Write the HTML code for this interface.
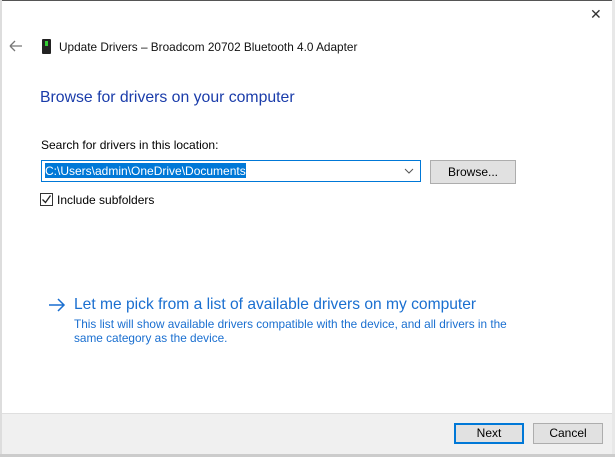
<!DOCTYPE html>
<html><head><meta charset="utf-8"><style>
*{margin:0;padding:0;box-sizing:border-box}
body{width:615px;height:457px;background:#fff;font-family:"Liberation Sans",sans-serif;font-size:12px;color:#000;position:relative;overflow:hidden}
.a{position:absolute;white-space:nowrap}
</style></head><body>
<div class="a" style="left:0;top:0;width:615px;height:1px;background:#555"></div>
<div class="a" style="left:0;top:0;width:2px;height:457px;background:#ddd"></div>
<div class="a" style="left:612px;top:0;width:3px;height:457px;background:#e8e8e8"></div>
<div class="a" style="left:590px;top:6px;font-size:14px;color:#333">✕</div>
<svg class="a" style="left:9px;top:40px" width="14" height="12"><path d="M1 6H13M1 6L6 1M1 6L6 11" stroke="#777" stroke-width="1.3" fill="none"/></svg>
<div class="a" style="left:42px;top:39px;width:9px;height:15px;background:#222;border-radius:1px"></div>
<div class="a" style="left:45px;top:41px;width:3px;height:5px;background:#3c3"></div>
<div class="a" style="left:59px;top:40px;font-size:11.8px;color:#111">Update Drivers – Broadcom 20702 Bluetooth 4.0 Adapter</div>
<div class="a" style="left:40px;top:89px;font-size:15.8px;color:#1a3caa">Browse for drivers on your computer</div>
<div class="a" style="left:41px;top:138px">Search for drivers in this location:</div>
<div class="a" style="left:41px;top:160px;width:380px;height:22px;border:1px solid #0078d7;background:#fff"></div>
<div class="a" style="left:45px;top:163px;height:15px;background:#0078d7;color:#fff;padding:1px 0 0;font-size:12px">C:\Users\admin\OneDrive\Documents</div>
<svg class="a" style="left:404px;top:168px" width="10" height="6"><path d="M1 1L5 5L9 1" stroke="#555" fill="none"/></svg>
<div class="a" style="left:430px;top:160px;width:86px;height:24px;border:1px solid #adadad;background:#e1e1e1;text-align:center;line-height:22px">Browse...</div>
<div class="a" style="left:40px;top:193px;width:13px;height:13px;border:1px solid #333;background:#fff"></div>
<svg class="a" style="left:41px;top:194px" width="11" height="11"><path d="M1.5 5.5L4.5 8.5L9.5 1.5" stroke="#222" stroke-width="1.3" fill="none"/></svg>
<div class="a" style="left:57px;top:193px">Include subfolders</div>
<svg class="a" style="left:48px;top:298px" width="18" height="14"><path d="M1 7H16M10 1L16 7L10 13" stroke="#1a6fd0" stroke-width="1.5" fill="none"/></svg>
<div class="a" style="left:74px;top:296px;font-size:15.6px;color:#1a6fd0">Let me pick from a list of available drivers on my computer</div>
<div class="a" style="left:74px;top:317px;font-size:11.8px;color:#1a6fd0;line-height:14px;white-space:normal;width:460px">This list will show available drivers compatible with the device, and all drivers in the<br>same category as the device.</div>
<div class="a" style="left:2px;top:413px;width:610px;height:41px;background:#f0f0f0;border-top:1px solid #dfdfdf"></div>
<div class="a" style="left:0;top:454px;width:615px;height:3px;background:#ccc"></div>
<div class="a" style="left:454px;top:423px;width:70px;height:21px;border:2px solid #0078d7;background:#e1e1e1;text-align:center;line-height:17px">Next</div>
<div class="a" style="left:533px;top:423px;width:70px;height:21px;border:1px solid #adadad;background:#e1e1e1;text-align:center;line-height:19px">Cancel</div>
</body></html>
